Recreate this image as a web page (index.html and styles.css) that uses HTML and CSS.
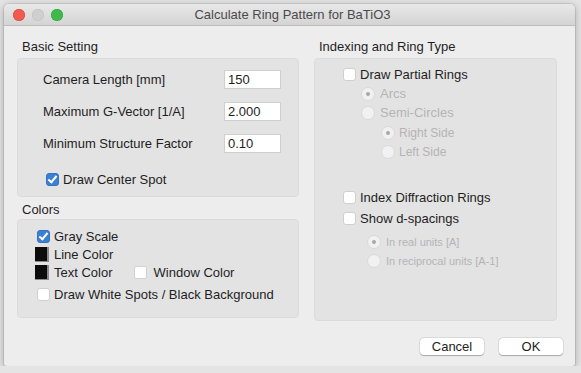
FILE: index.html
```html
<!DOCTYPE html>
<html lang="en">
<head>
    <meta charset="UTF-8">
    <title>Calculate Ring Pattern for BaTiO3</title>
    <link rel="stylesheet" href="styles.css">
</head>
<body>
    <div class="window">
        <div class="titlebar">
            <div class="lights">
                <span class="light red"></span>
                <span class="light gray"></span>
                <span class="light green"></span>
            </div>
            <div class="title">Calculate Ring Pattern for BaTiO3</div>
        </div>

        <div class="content">
            <div class="col-left">
                <div class="group-label">Basic Setting</div>
                <div class="box basic">
                    <div class="field">
                        <span>Camera Length [mm]</span>
                        <span class="input">150</span>
                    </div>
                    <div class="field">
                        <span>Maximum G-Vector [1/A]</span>
                        <span class="input">2.000</span>
                    </div>
                    <div class="field">
                        <span>Minimum Structure Factor</span>
                        <span class="input">0.10</span>
                    </div>
                    <div class="row center-spot">
                        <span class="check on"></span>
                        <span>Draw Center Spot</span>
                    </div>
                </div>

                <div class="group-label colors-label">Colors</div>
                <div class="box colors">
                    <div class="row">
                        <span class="check on"></span>
                        <span>Gray Scale</span>
                    </div>
                    <div class="row">
                        <span class="swatch"></span>
                        <span>Line Color</span>
                    </div>
                    <div class="row">
                        <span class="swatch"></span>
                        <span>Text Color</span>
                        <span class="swatch white"></span>
                        <span>Window Color</span>
                    </div>
                    <div class="row last">
                        <span class="check"></span>
                        <span>Draw White Spots / Black Background</span>
                    </div>
                </div>
            </div>

            <div class="col-right">
                <div class="group-label">Indexing and Ring Type</div>
                <div class="box rings">
                    <div class="row">
                        <span class="check"></span>
                        <span>Draw Partial Rings</span>
                    </div>
                    <div class="row off lvl1">
                        <span class="radio sel"></span>
                        <span>Arcs</span>
                    </div>
                    <div class="row off lvl1">
                        <span class="radio"></span>
                        <span>Semi-Circles</span>
                    </div>
                    <div class="row off lvl2 small sub-top">
                        <span class="radio sel"></span>
                        <span>Right Side</span>
                    </div>
                    <div class="row off lvl2 small">
                        <span class="radio"></span>
                        <span>Left Side</span>
                    </div>
                    <div class="row index-top">
                        <span class="check"></span>
                        <span>Index Diffraction Rings</span>
                    </div>
                    <div class="row spacing-top">
                        <span class="check"></span>
                        <span>Show d-spacings</span>
                    </div>
                    <div class="row off lvl3 smaller units-top">
                        <span class="radio sel"></span>
                        <span>In real units [A]</span>
                    </div>
                    <div class="row off lvl3 smaller">
                        <span class="radio"></span>
                        <span>In reciprocal units [A-1]</span>
                    </div>
                </div>
            </div>
        </div>

        <div class="buttons">
            <span class="btn">Cancel</span>
            <span class="btn">OK</span>
        </div>
    </div>
</body>
</html>
```

FILE: styles.css
```css
body {
    margin: 0;
    padding: 4px 0 0 4px;
    background-color: #e4e4e4;
    font-family: "Liberation Sans", Arial, sans-serif;
    font-size: 13px;
    color: #1e1e1e;
}
.window {
    width: 571px;
    height: 362px;
    background-color: #eeedee;
    border-radius: 5px 5px 3px 3px;
    box-shadow: 0 2px 8px rgba(0, 0, 0, 0.28), 0 0 0 1px rgba(0, 0, 0, 0.08);
    overflow: hidden;
}
.titlebar {
    height: 21px;
    position: relative;
    background: linear-gradient(#e9e8e9, #d5d4d5);
    border-bottom: 1px solid #bdbdbd;
    display: flex;
    align-items: center;
    justify-content: center;
}
.lights {
    position: absolute;
    left: 9px;
    top: 5px;
    display: flex;
    gap: 7px;
}
.light {
    width: 12px;
    height: 12px;
    border-radius: 50%;
}
.red {
    background-color: #f05a50;
    box-shadow: inset 0 0 0 0.5px #d8443b;
}
.gray {
    background-color: #d0cfd0;
    box-shadow: inset 0 0 0 0.5px #bebebe;
}
.green {
    background-color: #3fb94a;
    box-shadow: inset 0 0 0 0.5px #2da437;
}
.title {
    color: #4a4a4a;
    font-size: 13px;
    padding-left: 6px;
}
.content {
    display: flex;
    gap: 15px;
    padding: 13px 18px 0 13px;
}
.col-left {
    width: 282px;
}
.col-right {
    width: 243px;
}
.group-label {
    height: 16px;
    line-height: 16px;
    padding-left: 5px;
    margin-bottom: 3px;
}
.colors-label {
    margin-top: 5px;
    margin-bottom: 1px;
}
.box {
    background-color: #e4e3e4;
    border: 1px solid #dcdbdc;
    border-radius: 4px;
    box-sizing: border-box;
}
.basic {
    height: 139px;
    padding: 11px 17px 0 25px;
}
.field {
    display: flex;
    justify-content: space-between;
    align-items: center;
    height: 19px;
    margin-bottom: 13px;
}
.input {
    width: 57px;
    height: 19px;
    box-sizing: border-box;
    background-color: #fff;
    border: 1px solid #cfcfcf;
    line-height: 17px;
    padding-left: 3px;
}
.row {
    display: flex;
    align-items: center;
    gap: 4px;
    height: 18px;
}
.center-spot {
    margin-top: 17px;
    padding-left: 3px;
}
.check {
    width: 13px;
    height: 13px;
    box-sizing: border-box;
    background-color: #fff;
    border: 1px solid #cfcfcf;
    border-radius: 3px;
    position: relative;
}
.check.on {
    background-color: #3a80d4;
    border-color: #3373c2;
}
.check.on::after {
    content: "";
    position: absolute;
    left: 3px;
    top: 0px;
    width: 3px;
    height: 7px;
    border: solid #fff;
    border-width: 0 2px 2px 0;
    transform: rotate(40deg);
}
.colors {
    height: 99px;
    padding: 7px 0 0 19px;
}
.colors .row {
    height: 18px;
}
.colors .row.last {
    margin-top: 4px;
}
.swatch {
    width: 14px;
    height: 15px;
    box-sizing: border-box;
    background-color: #0c0c0c;
    border-right: 2px solid #8a8a8a;
    border-bottom: 1px solid #8a8a8a;
    margin-left: -2px;
    margin-right: 1px;
}
.swatch.white {
    width: 13px;
    height: 13px;
    background-color: #fff;
    border: 1px solid #d2d2d2;
    border-radius: 2px;
    margin-left: 17px;
    margin-right: 3px;
}
.rings {
    height: 263px;
    padding: 6px 0 0 28px;
}
.rings .row {
    height: 19px;
}
.off {
    color: #b4b4b4;
}
.lvl1 {
    padding-left: 18px;
    gap: 5px;
}
.lvl2 {
    padding-left: 38px;
    gap: 4px;
}
.lvl3 {
    padding-left: 24px;
    gap: 5px;
}
.small {
    font-size: 12px;
}
.smaller {
    font-size: 11px;
}
.sub-top {
    margin-top: 1px;
}
.index-top {
    margin-top: 27px;
}
.spacing-top {
    margin-top: 2px;
}
.units-top {
    margin-top: 4px;
}
.radio {
    width: 14px;
    height: 14px;
    box-sizing: border-box;
    border-radius: 50%;
    background-color: #f1f1f1;
    border: 1px solid #d9d9d9;
    position: relative;
}
.radio.sel::after {
    content: "";
    position: absolute;
    left: 4px;
    top: 4px;
    width: 4px;
    height: 4px;
    border-radius: 50%;
    background-color: #a8a8a8;
}
.buttons {
    display: flex;
    justify-content: flex-end;
    gap: 15px;
    padding: 17px 12px 0 0;
}
.btn {
    width: 64px;
    height: 17px;
    line-height: 17px;
    text-align: center;
    background-color: #fff;
    border-radius: 4px;
    box-shadow: 0 0.5px 1px rgba(0, 0, 0, 0.25), 0 0 0 0.5px rgba(0, 0, 0, 0.12);
}
```
